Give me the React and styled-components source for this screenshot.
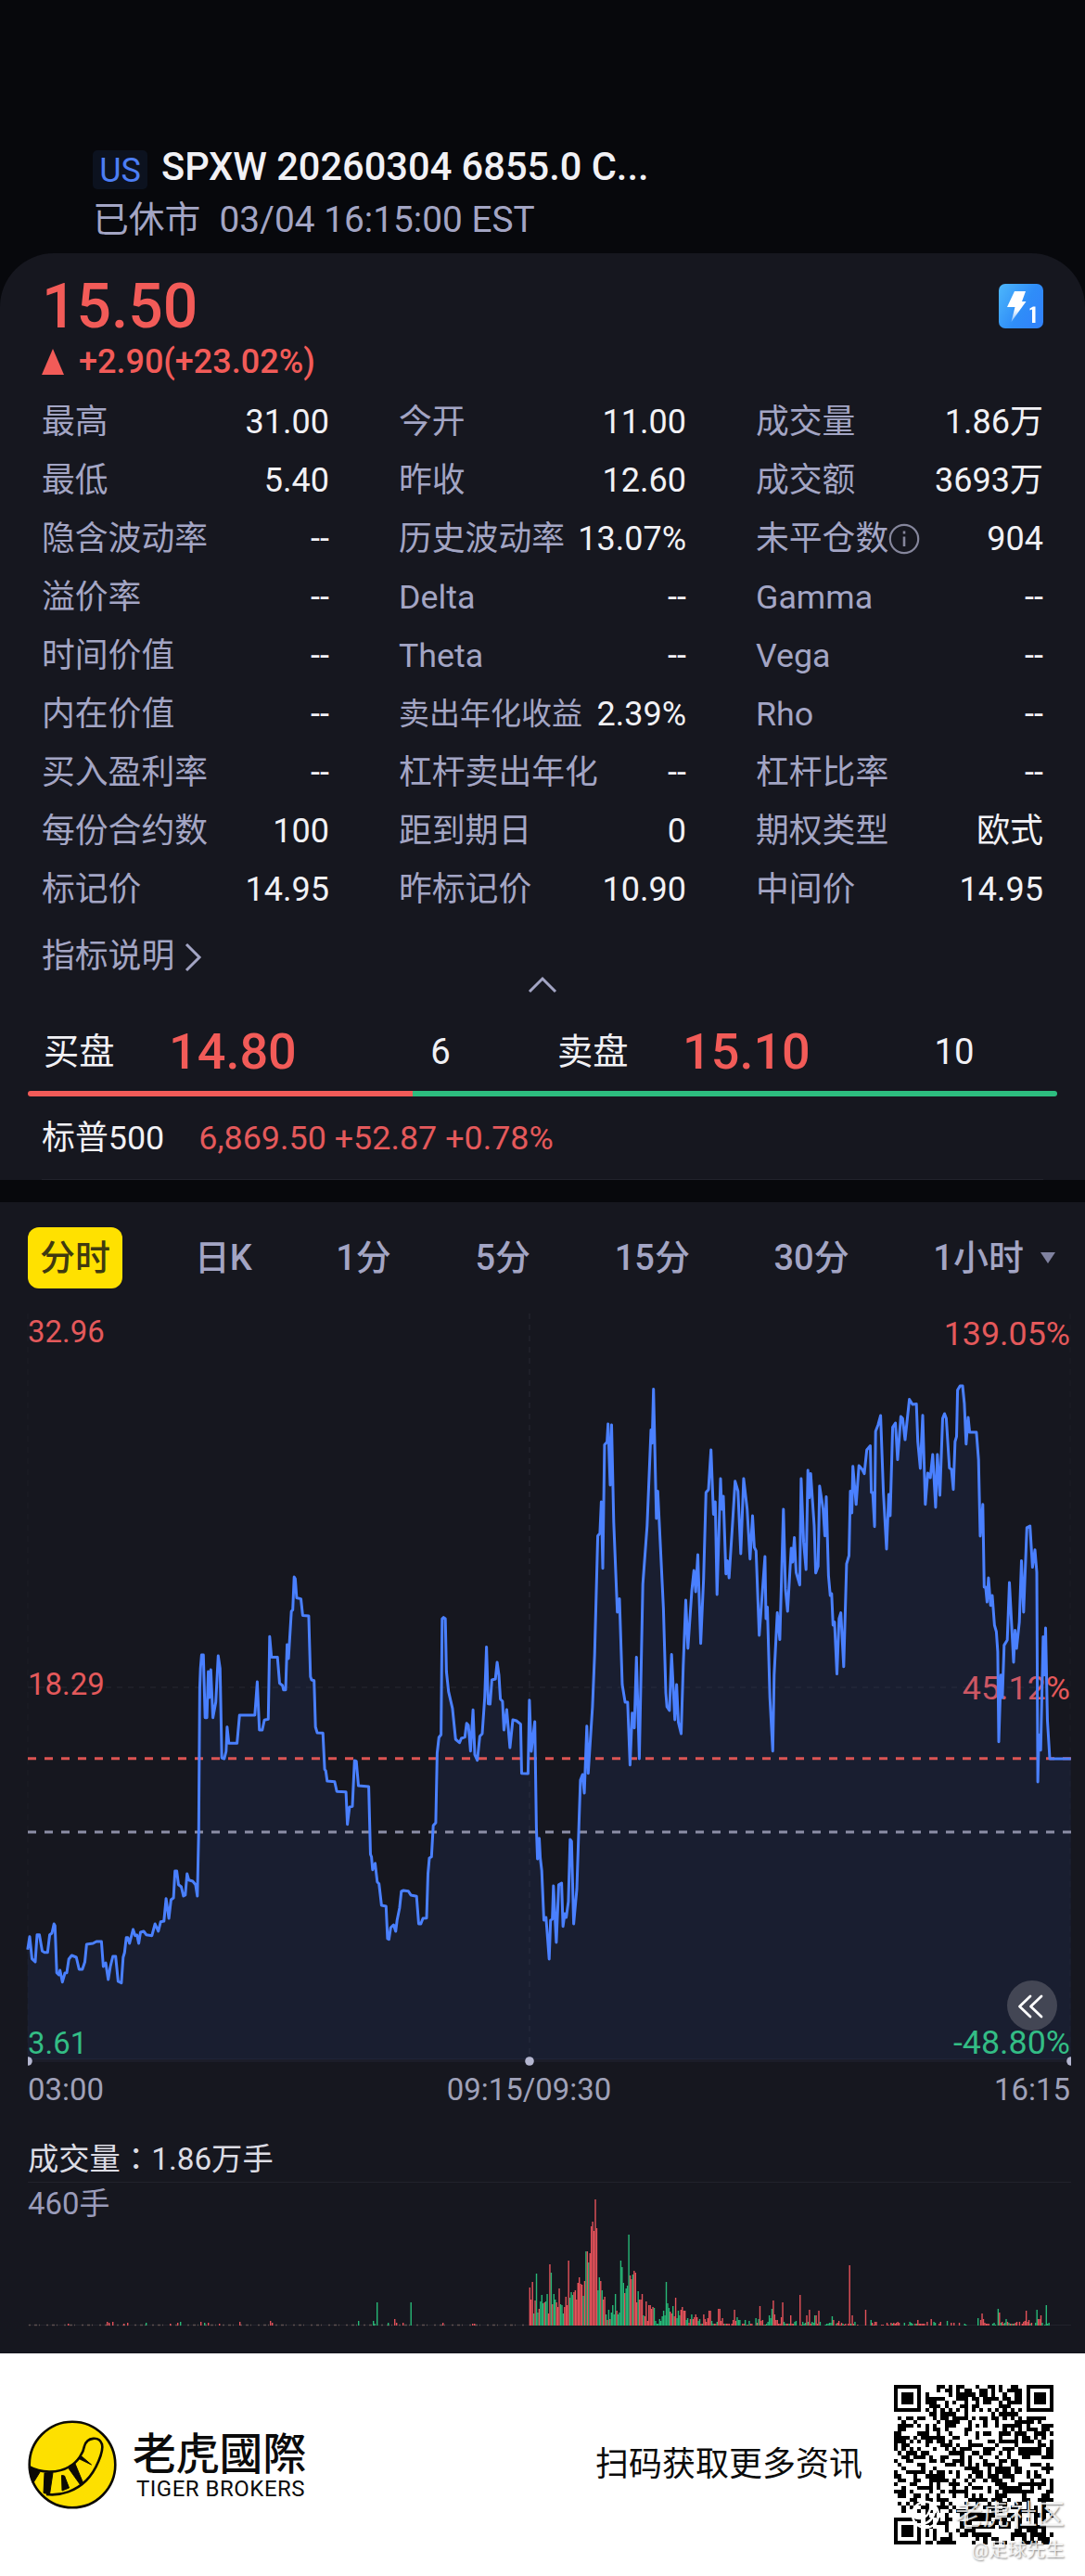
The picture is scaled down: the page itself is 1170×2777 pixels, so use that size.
import React from "react";
import styled, { createGlobalStyle } from "styled-components";

const COLORS = {
  page: "#07080c",
  panel: "#16171f",
  line: "#22232c",
  text: "#f1f1f5",
  muted: "#a3a5c4",
  red: "#f25b58",
  green: "#2dbd7f",
  blue: "#4a80ff",
  brand: "#ffe100",
};

const STATS = [
  ["最高", "31.00"],
  ["今开", "11.00"],
  ["成交量", "1.86万"],
  ["最低", "5.40"],
  ["昨收", "12.60"],
  ["成交额", "3693万"],
  ["隐含波动率", "--"],
  ["历史波动率", "13.07%"],
  ["未平仓数", "904", "info"],
  ["溢价率", "--"],
  ["Delta", "--"],
  ["Gamma", "--"],
  ["时间价值", "--"],
  ["Theta", "--"],
  ["Vega", "--"],
  ["内在价值", "--"],
  ["卖出年化收益", "2.39%", "small"],
  ["Rho", "--"],
  ["买入盈利率", "--"],
  ["杠杆卖出年化", "--"],
  ["杠杆比率", "--"],
  ["每份合约数", "100"],
  ["距到期日", "0"],
  ["期权类型", "欧式"],
  ["标记价", "14.95"],
  ["昨标记价", "10.90"],
  ["中间价", "14.95"],
];

const TABS = ["分时", "日K", "1分", "5分", "15分", "30分", "1小时"];

// x,y pairs of the price line, in chart units
const PRICE_LINE = `
29.8,701.7 32,687.7 34.5,711.7 38,715 40,685.7 42.5,685.7 45.5,703.3 48,704.7 51.3,704.7 53.6,685.7
56,684 58.2,674 59.3,676 61.2,726.7 63.5,729 64.7,724 67.3,736.7 70,727 72,726.7 74.2,712
77.3,708 82.3,710 85.3,723 88.8,723 91.5,715 93.4,696 100.3,695 104,693 109.4,693 111.4,720
114,716 116.7,734 119,720 121.7,709 124.7,709 127.4,736 130.9,737.7 132.8,710 134.3,705 136.2,688.7
137.8,688.7 139.7,695 143.5,680 145.8,686.7 147.7,686 149.6,695 151.5,683 155,682 157.7,685.7 163.8,686.7
167.2,674 170.7,682 173.3,671.7 176.8,671 179.1,646.7 182.1,668 184.4,648 187.1,646 188.7,617 190.6,617
192.5,631.7 195.5,634 197.8,644 199.8,643 201.7,620 203.6,626.7 207.8,628 210.9,631.7 212.8,644 214.3,573
215.4,420 216.2,398.6 217.4,384 219.3,384 221.2,451.7 223.1,451.7 224.6,402 225.8,430 227.3,400 229.6,451.7
232.7,435 235.3,385 237.3,398.6 239.2,495 241.8,496 243.8,488 244.9,461.7 246.8,479.3 255.6,479.3 258.3,449
274.8,449 277.4,413 279.7,465 282.8,465 285.1,454.3 289.3,453.3 290.8,364.3 292.7,386.4 299.2,386.4 301.5,414.6
304.6,417 305.8,421.8 308,421.8 309.6,372.9 311.1,387.9 314.2,337.1 315.7,335.4 317.2,300 318.4,302 319.9,322.5
324.5,323.6 326.4,341.4 332.9,342 334.8,407.5 336,411 338.7,411.8 340.2,461.7 342.1,468 348.2,468.3 350.1,507.3
351.3,509 352.8,520 360.9,520.7 363.2,531.3 373.1,531.7 374.6,566.7 376.9,548 380,547.3 382.3,498 384.2,498.7
386.5,525 397.6,526 399.5,599 400.6,601.7 401.8,615.7 404.5,608.7 406.8,628.7 408.7,630.7 411.4,654 416.3,655
417.9,690 419.4,690.7 421.3,678 424.4,675 426.7,682 428.2,670 430.9,656.7 432.8,639 435.1,638 440.4,638.7
443.1,643 449.2,644.3 451.5,674 453.8,674 456.1,668 460,667.7 461.5,620 463,603 465.3,601.7 467.2,568
469.9,565 471.4,490 473.3,473 475.6,470 476.8,345 478.3,343.6 480.2,345 481.4,402 483.7,423.6 487.9,441.7
491.3,475 495.5,478.7 497.5,474 501.3,472.7 503.2,457.7 505.1,460 507.4,487.7 510.1,443.3 512,491.7 514.7,497.7
517.4,471.7 520,469 522.7,430 524.6,375.4 526.5,436.7 528.5,437 530.4,411 534.2,410 536.1,392 538,405.7
539.6,431.7 541.9,434 543.4,465 546.4,443 549.9,484 553,454 556.8,455 561.4,458.7 562.5,511.7 569.4,512
570.9,432.7 572.9,488 576.7,456 578.4,570 579.6,604 581.5,581.7 582.6,603 584.2,616.7 586.5,670 588.8,667
592.2,712 593.7,670 595.6,669 596.8,633 599.9,694 602.5,631.7 605.6,630 607.1,676.7 609,663 610.6,667
612.9,650 614.8,583 616.3,585 618.6,674 622,636.7 624.3,566.7 625.9,519 628.2,513 630.1,533 632.8,460.7
634.3,511.7 638.9,440 641.2,384 644.6,255.7 646.9,252.9 648.4,219 650,290.7 651.9,157.5 654.6,154.6 655.7,135
658,201 659.5,136 661.8,241 665.7,337.9 668,323.6 671,416 674.1,435 676.8,435 679.4,502.7 681.7,446.7
684,462.7 686.3,386.4 689.4,496 693.2,307.9 697.8,245 702,141.4 703.2,155.7 704.7,97.5 707.8,237 709.3,207.5
715.4,334 718,425 719.2,440 721.9,444 724.2,383.6 727.7,454 729.6,416 731.5,456.7 734.5,469 736.8,395
739.5,325 741.8,377 746,314.6 748.3,293 750.2,316 752.5,276 755.6,371.8 758.7,302 761.3,209 764,205.7
766.7,162.9 769.4,232.5 771.3,219 773.2,319 777,194 778.2,227 780,212.9 782.8,296.8 784.3,282.5 786.2,301
790,241 792.7,196.8 795.8,207.5 798.8,275 801.9,194 805.7,227 808.8,280.7 811.5,234 813.4,268 815.3,271.8
818.7,362.9 824.9,277.9 826,345 827.5,332.5 830.2,430 833.3,487.7 834.8,405.7 838.2,338.6 840.9,367.5 844.8,227
847,312.9 849.3,337 853.2,269 854.7,284 856.6,257.5 858.5,295 862.4,308.6 863.9,194 866.6,262.9 869.2,292
871.2,185 872.7,214.6 874.2,188.6 878,245 879.6,295.7 882.2,288.6 883.8,202 887.6,227 889.5,255.7 891,213.6
893.4,298.6 895.3,320 896.8,318 898.3,352 899.9,348.6 902.5,404.6 904.8,345 906.7,338.6 909.8,396.8 912.9,286
915.5,277 917,207.5 918.6,231 919.7,180.7 923.2,221.8 926.2,180 929.7,184 932,188.6 934.7,162.9 938.5,158.6
939.6,209 941.1,209 943.1,245.7 944.2,143 946.9,136 949.6,126 952.6,209 956,270 958.4,211 959.9,234
962.6,138.6 965.6,134 967.9,173.6 971.4,127 973.3,129 976,152 980.6,108.6 984,114 988.2,113.6 989.7,154
992.4,182.9 995,125.7 997.8,221.8 1000.5,187.9 1003.2,193 1005.8,168 1008.9,225 1010.8,168 1013.5,212 1016.5,129
1018.5,124 1020.4,129 1023.8,182.5 1026,184 1028,205.7 1029.9,154 1031.5,148.6 1032.6,98.6 1035.3,94 1038,94
1039.9,113 1041.8,156.8 1044,127.9 1045.6,144 1052.9,144 1055.2,173.6 1057,256 1059.8,221.8 1061.3,311 1062.9,311
1064.4,327 1065.9,301 1068.2,330.7 1070,320 1072.4,352 1074.4,359 1075.9,380.7 1077,477.7 1079.3,405.7 1080.9,430
1082.8,373.6 1086.2,368 1088.5,306 1093,392 1094.6,357.5 1096.2,377 1099.2,348.6 1101.5,282.5 1103.8,337.9 1107.3,246.8
1110.7,245 1113.4,289.6 1116,270.7 1118,295 1119.1,521 1120.3,470 1122.2,486.7 1124.9,364.6 1126,405.7 1127.5,355
1129.5,455 1132,496 1154.7,496`.trim();

// one bar per minute from 09:30, negative values are down minutes
const OPEN_VOLUME = [
  41, 28, 47, -13, 27, -56, -14, 18, -26, -33, -24, 25, -26, -34, 13, 66, -57, 23, -34, -28,
  25, 20, 40, -23, -22, -13, 20, 31, 22, 70, -30, -36, -33, 36, 38, 28, 46, 52, 45, 44,
  -32, 48, -80, 80, -68, 78, 107, 112, 102, 136, 105, -38, -52, 48, -38, 28, 31, -12, 6, -17,
  7, -14, -22, -12, -34, 16, -12, -14, -70, -63, -46, 35, -40, -43, -98, 54, 50, -55, 59, 57,
  25, -37, 28, 28, 34, -11, 10, 26, 5, 22, 22, 18, 20, -19, -5, -2, -2, -7, -5, -10,
  -16, -11, -47, -24, -19, 15, 13, -21, 10, 30, -8, -16, -11, 17, 20, 16, 16, -6, -8, 3,
  7, -12, 7, 9, 12, 9, -5, -7, 2, -2, 12, 7, 4, 8, 16, 16, -5, -2, 2, 2,
  -4, 18, 18, 5, 8, 2, -2, 2, 2, 2, 0, 2, 6, 17, 5, -9, -6, -6, 0, 2,
  2, -6, -1, 1, -5, 2, 2, 0, 0, -8, 3, -7, 21, 5, 6, -1, 1, -2, -4, -11,
  -8, -18, 27, 12, 6, 6, 2, 2, 9, 25, -4, -2, 2, 2, -2, 11, 2, 2, -4, -5,
  0, 0, 33, 1, -4, -2, -3, 11, -4, 17, 2, -4, -3, -11, 11, 2, 16, -4, 0, 0,
  0, -1, -2, -2, -3, -3, -10, 6, 0, -2, 3, 5, 1, 3, -2, 1, 2, 0, 2, 65,
  -2, 11, 2, -4, 0, 1, 0, 0, 0, 0, 0, 17, 0, 0, 0, -6, 3, 1, 4, 4,
];

// [minute, volume]
const LATE_VOLUME = [
  [263, 1], [264, 1], [267, 3], [268, 1], [270, 3], [271, -2], [272, 3], [273, 2], [274, 3], [275, 4],
  [276, 3], [280, -3], [283, 1], [284, -4], [285, -3], [286, -2], [288, 2], [289, -2], [290, 6], [291, 2],
  [292, 2], [293, 2], [294, 2], [295, 2], [297, 4], [300, 7], [302, -4], [303, -3], [306, 2], [307, 4],
  [312, -5], [315, 3], [317, 3], [321, 3], [325, -2], [326, -1], [335, -8], [337, 6], [338, 13], [339, 7],
  [340, 3], [341, 2], [342, 2], [343, 2], [346, -2], [347, -3], [348, -1], [350, -18], [351, 14], [352, -3],
  [353, 4], [354, 2], [355, -3], [356, -7], [357, 4], [358, -3], [359, 2], [360, -2], [361, 2], [362, -2],
  [363, 3], [364, 4], [366, 4], [368, 2], [369, 4], [370, 5], [371, 16], [372, 4], [373, 6], [374, -2],
  [375, 3], [378, -3], [379, -17], [380, 7], [381, 7], [382, 11], [383, -3], [385, -1], [386, -22], [387, -2],
  [388, -3],
];

// [x, volume]
const PRE_VOLUME = [
  [73, 2], [115, 4], [117, 3], [121, 4], [133, 2], [137, 3], [157, -3], [183, 2], [191, 3], [194, -4],
  [216, 4], [220, -3], [224, 3], [236, 2], [258, 4], [291, 5], [293, 3], [386, -5], [402, -5], [403.5, -2],
  [406, -25], [418, -3], [425, 7], [427, 3], [434, 3], [442.5, -25], [477, 3], [509, 2], [511, 2],
];

const QR_SIZE = 41;
const FINDERS = [
  [0, 0],
  [QR_SIZE - 7, 0],
  [0, QR_SIZE - 7],
];

const ringCell = (x, y, size) => {
  const d = Math.min(x, y, size - 1 - x, size - 1 - y);
  return d !== 1;
};

const isDark = (x, y) => {
  for (const [fx, fy] of FINDERS) {
    const dx = x - fx;
    const dy = y - fy;
    if (dx >= -1 && dx <= 7 && dy >= -1 && dy <= 7) {
      return dx >= 0 && dx < 7 && dy >= 0 && dy < 7 && ringCell(dx, dy, 7);
    }
  }
  if (x >= 32 && x < 37 && y >= 32 && y < 37) return ringCell(x - 32, y - 32, 5);
  if (x === 6) return y % 2 === 0;
  if (y === 6) return x % 2 === 0;
  let n = (x * 374761393 + y * 668265263) | 0;
  n = Math.imul(n ^ (n >>> 13), 1274126177);
  return ((n ^ (n >>> 16)) & 1) === 1;
};

const qrPath = () => {
  let d = "";
  for (let y = 0; y < QR_SIZE; y++) {
    for (let x = 0; x < QR_SIZE; x++) {
      if (isDark(x, y)) d += `M${x} ${y}h1v1h-1z`;
    }
  }
  return d;
};

const BoltIcon = () => (
  <svg width="48" height="48" viewBox="0 0 48 48">
    <defs>
      <linearGradient id="bolt" x1="0" y1="0.1" x2="1" y2="0.7">
        <stop offset="0" stopColor="#4bb4fb" />
        <stop offset="0.6" stopColor="#2f8df8" />
        <stop offset="1" stopColor="#3183fb" />
      </linearGradient>
      <linearGradient id="boltFade" x1="0" y1="0" x2="0" y2="1">
        <stop offset="0" stopColor="#fff" />
        <stop offset="0.6" stopColor="#fff" />
        <stop offset="1" stopColor="#fff" stopOpacity="0.35" />
      </linearGradient>
    </defs>
    <rect width="48" height="48" rx="7" fill="url(#bolt)" />
    <path d="M17 8h12l-4 11h4.500L13.500 41l4-16H9z" fill="url(#boltFade)" />
    <path d="M33.500 26.500l3.500-2h2.500V42h-3.500V27.500l-2.500 1z" fill="#fff" />
  </svg>
);

const InfoIcon = () => (
  <svg width="34" height="34" viewBox="0 0 34 34" fill="none" stroke="#85869c">
    <circle cx="17" cy="17" r="15.200" strokeWidth="2.200" />
    <path d="M17 14.500V25" strokeWidth="2.600" />
    <path d="M17 8.500v3" strokeWidth="2.600" />
  </svg>
);

const TigerLogo = () => (
  <svg width="96" height="96" viewBox="0 0 96 96">
    <defs>
      <clipPath id="logoClip">
        <circle cx="48" cy="48" r="47.500" />
      </clipPath>
    </defs>
    <circle cx="48" cy="48" r="46.300" fill="#fde000" stroke="#0c0a05" strokeWidth="2.600" />
    <g clipPath="url(#logoClip)" stroke="#0c0a05" strokeWidth="2.600" strokeLinejoin="round">
      <path
        d="M1 50C14 57 32 58 45 50C54 45 60 35 61 28C64 18 77 17 80 26C82 33 74 54 63 65C52 76 36 82 20 80"
        fill="none"
      />
      <path d="M2 51l11 5-8 13z" fill="#0c0a05" strokeWidth="1" />
      <path d="M18 57l9-.500L23.500 80l-6.500-1.500z" fill="#0c0a05" strokeWidth="1" />
      <path d="M36.500 59.500l3 .500L44.500 73l-7.500 3z" fill="#0c0a05" strokeWidth="1" />
      <path d="M44 52l7-5 8.500 20.500-3 2z" fill="#0c0a05" strokeWidth="1" />
      <path d="M54 41l4-2L68.500 48z" fill="#0c0a05" strokeWidth="1" />
    </g>
  </svg>
);

const PriceChart = () => (
  <ChartWrap>
    <svg width="1170" height="884" viewBox="0 0 1170 884">
      <g stroke={COLORS.line} strokeWidth="1.500" strokeDasharray="6 6">
        <path d="M571 16V821M30 419H1155" />
        <path d="M30 16V821M1154 16V821" opacity="0.4" />
      </g>
      <AxisLabel x="30" y="47" $tone="red">32.96</AxisLabel>
      <AxisLabel x="30" y="427" $tone="red">18.29</AxisLabel>
      <AxisLabel x="1154" y="50" $tone="red" $large textAnchor="end">139.05%</AxisLabel>
      <AxisLabel x="1154" y="431.500" $tone="red" $large textAnchor="end">45.12%</AxisLabel>
      <path d="M30 821H1155" stroke="#1c1d29" strokeWidth="4" />
      <polygon points={`29.800,820 ${PRICE_LINE} 1154.700,820`} fill="rgba(45, 77, 162, 0.13)" />
      <path d="M30 495.700H1155" stroke={COLORS.red} strokeWidth="3" strokeDasharray="9 9" opacity="0.9" />
      <path d="M30 575H1155" stroke="#8c8ea6" strokeWidth="3" strokeDasharray="9 9" />
      <polyline points={PRICE_LINE} fill="none" stroke={COLORS.blue} strokeWidth="3" strokeLinejoin="round" />
      <AxisLabel x="30" y="814" $tone="green">3.61</AxisLabel>
      <g fill="#b4b6d0">
        <path d="M30 817.200a4.800 4.800 0 0 1 0 9.600z" />
        <circle cx="571" cy="822" r="4.800" />
        <path d="M1155 817.200a4.800 4.800 0 0 0 0 9.600z" />
      </g>
      <AxisLabel x="30" y="864">03:00</AxisLabel>
      <AxisLabel x="570.500" y="864" textAnchor="middle">09:15/09:30</AxisLabel>
      <AxisLabel x="1154" y="864" textAnchor="end">16:15</AxisLabel>
    </svg>
    <CollapseButton>
      <svg width="54" height="54" viewBox="0 0 54 54" fill="none" stroke="#fff" strokeWidth="2.800">
        <path d="M25 17L13.500 28 25 39M37 17L25.500 28 37 39" strokeLinecap="round" strokeLinejoin="round" />
      </svg>
    </CollapseButton>
    <svg width="1170" height="884" viewBox="0 0 1170 884">
      <AxisLabel x="1154" y="813.500" $tone="green" $large textAnchor="end">-48.80%</AxisLabel>
    </svg>
  </ChartWrap>
);

const VolumeBar = ({ x, value }) =>
  value ? (
    <rect
      x={x}
      y={154 - Math.abs(value)}
      width="1.400"
      height={Math.abs(value)}
      fill={value > 0 ? "#e5525a" : "#27b877"}
    />
  ) : null;

const VolumeChart = () => (
  <svg width="1170" height="184" viewBox="0 0 1170 184">
    <AxisLabel x="30" y="34" $tone="volume">460手</AxisLabel>
    <path d="M30 153.500H1155" stroke="#22232c" strokeWidth="1" />
    <path d="M31 153.500H565" stroke="#77645f" strokeWidth="1.500" strokeDasharray="2 4 3 2 1 7" opacity="0.7" />
    {PRE_VOLUME.map(([x, value]) => (
      <VolumeBar key={x} x={x} value={value} />
    ))}
    {OPEN_VOLUME.map((value, i) => (
      <VolumeBar key={i} x={570.6 + i * 1.443} value={value} />
    ))}
    {LATE_VOLUME.map(([minute, value]) => (
      <VolumeBar key={minute} x={570.6 + minute * 1.443} value={value} />
    ))}
  </svg>
);

const App = () => (
  <>
    <GlobalStyle />
    <Page>
      <Header>
        <TitleRow>
          <Market>US</Market>
          <Title>SPXW 20260304 6855.0 C...</Title>
        </TitleRow>
        <Status>
          <span>已休市</span>
          <span>03/04 16:15:00 EST</span>
        </Status>
      </Header>

      <QuoteCard>
        <PriceRow>
          <Price>15.50</Price>
          <BoltIcon />
        </PriceRow>
        <Change>
          <UpArrow />
          +2.90(+23.02%)
        </Change>
        <StatGrid>
          {STATS.map(([label, value, variant]) => (
            <Stat key={label}>
              <StatLabel $small={variant === "small"}>
                {label}
                {variant === "info" && <InfoIcon />}
              </StatLabel>
              <span>{value}</span>
            </Stat>
          ))}
        </StatGrid>
        <NoteRow>
          <Note>
            指标说明
            <svg width="24" height="34" viewBox="0 0 24 34" fill="none" stroke={COLORS.muted} strokeWidth="3">
              <path d="M5 3l14 14L5 31" />
            </svg>
          </Note>
          <svg width="34" height="22" viewBox="0 0 34 22" fill="none" stroke={COLORS.muted} strokeWidth="3">
            <path d="M3 18L17 4l14 14" />
          </svg>
        </NoteRow>
        <Depth>
          <DepthSide>
            <span>买盘</span>
            <DepthPrice>14.80</DepthPrice>
            <DepthSize>6</DepthSize>
          </DepthSide>
          <DepthSide>
            <span>卖盘</span>
            <DepthPrice>15.10</DepthPrice>
            <DepthSize>10</DepthSize>
          </DepthSide>
        </Depth>
        <DepthBar />
        <IndexRow>
          标普500
          <IndexValue>6,869.50 +52.87 +0.78%</IndexValue>
        </IndexRow>
      </QuoteCard>

      <ChartPanel>
        <Tabs>
          {TABS.map((tab, i) => (
            <Tab key={tab} $active={i === 0} $last={i === TABS.length - 1}>
              {tab}
              {i === TABS.length - 1 && <Caret />}
            </Tab>
          ))}
        </Tabs>
        <PriceChart />
        <VolumeTitle>
          成交量<Colon>：</Colon>1.86万手
        </VolumeTitle>
        <VolumeChart />
      </ChartPanel>

      <Footer>
        <TigerLogo />
        <Brand>
          <BrandName>老虎國際</BrandName>
          <BrandSub>TIGER BROKERS</BrandSub>
        </Brand>
        <ScanText>扫码获取更多资讯</ScanText>
        <svg width="172" height="172" viewBox="0 0 41 41" shapeRendering="crispEdges">
          <path d={qrPath()} fill="#000" />
        </svg>
        <Watermark>
          <WatermarkName>
            <svg width="32" height="32" viewBox="0 0 32 32" fill="none" stroke="#fff" strokeWidth="2.500">
              <circle cx="16" cy="16" r="14" />
              <path d="M2 18c10 5 17 0 19-8 5-2 6 3 3 8-4 7-10 9-17 8" />
            </svg>
            老虎社区
          </WatermarkName>
          <WatermarkUser>@足球先生</WatermarkUser>
        </Watermark>
      </Footer>
    </Page>
  </>
);

export default App;

const GlobalStyle = createGlobalStyle`
  body {
    margin: 0;
    background: ${COLORS.page};
    font-family: Roboto, "Noto Sans CJK SC", sans-serif;
  }
  svg {
    display: block;
    flex-shrink: 0;
  }
`;

const Page = styled.div`
  width: 1170px;
  height: 2777px;
  overflow: hidden;
  background: ${COLORS.page};
  color: ${COLORS.text};
`;

const Header = styled.header`
  box-sizing: border-box;
  height: 273px;
  padding: 156px 100px 0;
`;

const TitleRow = styled.div`
  display: flex;
  height: 46px;
`;

const Market = styled.span`
  width: 59px;
  height: 42px;
  margin: 6px 15px 0 0;
  border-radius: 5px;
  background: #0c121f;
  color: #4c7ef5;
  font-size: 36px;
  line-height: 45px;
  text-align: center;
`;

const Title = styled.h1`
  margin: 0;
  font-size: 41.6px;
  font-weight: 500;
  line-height: 48px;
`;

const Status = styled.div`
  display: flex;
  gap: 20px;
  color: ${COLORS.muted};
  font-size: 38.8px;
  line-height: 69px;
`;

const QuoteCard = styled.section`
  box-sizing: border-box;
  height: 999px;
  padding: 33px 45px 0 45px;
  border-radius: 58px 58px 0 0;
  background: ${COLORS.panel};
`;

const PriceRow = styled.div`
  display: flex;
  justify-content: space-between;
  height: 48px;
`;

const Price = styled.div`
  color: ${COLORS.red};
  font-size: 66px;
  font-weight: 500;
  line-height: 49px;
`;

const Change = styled.div`
  display: flex;
  align-items: center;
  gap: 16px;
  height: 69px;
  padding-top: 3px;
  box-sizing: border-box;
  color: ${COLORS.red};
  font-size: 36px;
  font-weight: 500;
`;

const UpArrow = styled.i`
  border: 12.5px solid transparent;
  border-top: 0;
  border-bottom: 28px solid ${COLORS.red};
`;

const StatGrid = styled.div`
  display: grid;
  grid-template-columns: repeat(3, 1fr);
  grid-auto-rows: 63px;
  column-gap: 75px;
`;

const Stat = styled.div`
  display: flex;
  align-items: center;
  justify-content: space-between;
  font-size: 36px;
  line-height: 64px;
  white-space: nowrap;
`;

const StatLabel = styled.span`
  display: flex;
  align-items: center;
  color: ${COLORS.muted};
  font-size: ${(props) => (props.$small ? "33px" : "35.8px")};
`;

const NoteRow = styled.div`
  display: grid;
  grid-template-columns: 1fr auto 1fr;
  align-items: end;
  height: 83px;
`;

const Note = styled.div`
  display: flex;
  align-items: center;
  gap: 8px;
  color: ${COLORS.muted};
  font-size: 35.8px;
  line-height: 83px;
`;

const Depth = styled.div`
  display: grid;
  grid-template-columns: 554px 1fr;
  height: 85px;
  padding-top: 18px;
`;

const DepthSide = styled.div`
  display: grid;
  grid-template-columns: 135px 193px 200px;
  align-items: center;
  padding-left: 2px;
  font-size: 38.3px;
  line-height: 85px;
`;

const DepthPrice = styled.span`
  color: ${COLORS.red};
  font-size: 54px;
  font-weight: 500;
`;

const DepthSize = styled.span`
  text-align: center;
`;

const DepthBar = styled.div`
  height: 6px;
  margin: 0 -15px;
  border-radius: 3px;
  background: linear-gradient(to right, ${COLORS.red} 415px, ${COLORS.green} 415px);
`;

const IndexRow = styled.div`
  display: flex;
  gap: 37px;
  height: 89px;
  border-bottom: 1px solid ${COLORS.line};
  font-size: 35.9px;
  line-height: 91px;
`;

const IndexValue = styled.span`
  color: #e4595b;
`;

const ChartPanel = styled.section`
  box-sizing: border-box;
  height: 1241px;
  margin-top: 24px;
  padding-top: 27px;
  background: ${COLORS.panel};
`;

const Tabs = styled.nav`
  display: flex;
  justify-content: space-between;
  height: 66px;
  margin: 0 32px 11px 30px;
`;

const Tab = styled.div`
  display: flex;
  align-items: center;
  padding: 0 ${(props) => (props.$last ? 0 : "13px")} 0 13px;
  border-radius: 12px;
  background: ${(props) => (props.$active ? COLORS.brand : "none")};
  color: ${(props) => (props.$active ? "#3f3a10" : COLORS.muted)};
  font-size: 38px;
  font-weight: 500;
  line-height: 64px;
`;

const Caret = styled.i`
  margin-left: 18px;
  border: 8px solid transparent;
  border-top: 12px solid #8082a0;
  border-bottom: 0;
`;

const ChartWrap = styled.div`
  display: grid;
  height: 884px;
  > * {
    grid-area: 1 / 1;
  }
`;

const TONES = {
  red: "#e4595b",
  green: "#33bd85",
  volume: "#9a9cba",
};

const AxisLabel = styled.text`
  fill: ${(props) => TONES[props.$tone] || "#9fa1b8"};
  font-size: ${(props) => (props.$large ? "35.8px" : "32.9px")};
`;

const CollapseButton = styled.div`
  align-self: end;
  justify-self: end;
  width: 54px;
  height: 54px;
  margin: 0 30px 95px 0;
  border-radius: 50%;
  background: #434654;
`;

const VolumeTitle = styled.div`
  margin: 19px 15px 0 30px;
  border-bottom: 1px solid ${COLORS.line};
  color: #dcdce4;
  font-size: 33.3px;
  line-height: 49px;
`;

const Colon = styled.span`
  font-family: "Noto Sans CJK TC", sans-serif;
  line-height: 1;
`;

const Footer = styled.footer`
  position: relative;
  display: flex;
  align-items: center;
  box-sizing: border-box;
  height: 240px;
  padding: 0 34px 0 30px;
  background: #fff;
  color: #0b0b0b;
`;

const Brand = styled.div`
  margin-left: 17px;
`;

const BrandName = styled.div`
  font-family: "Noto Sans CJK TC", sans-serif;
  font-size: 46.8px;
  font-weight: 500;
  line-height: 48px;
`;

const BrandSub = styled.div`
  padding: 3px 0 0 4px;
  font-size: 24px;
  letter-spacing: 0.5px;
  line-height: 28px;
`;

const ScanText = styled.div`
  margin: 0 34px 0 auto;
  font-size: 36px;
  line-height: 48px;
`;

const Watermark = styled.div`
  position: absolute;
  right: 22px;
  bottom: 12px;
  display: flex;
  flex-direction: column;
  align-items: flex-end;
  color: rgba(255, 255, 255, 0.8);
  text-shadow: 1px 1px 2px rgba(0, 0, 0, 0.5);
`;

const WatermarkName = styled.div`
  display: flex;
  align-items: center;
  gap: 16px;
  font-size: 29.5px;
  line-height: 44px;
`;

const WatermarkUser = styled.div`
  font-size: 20.5px;
  line-height: 32px;
`;
